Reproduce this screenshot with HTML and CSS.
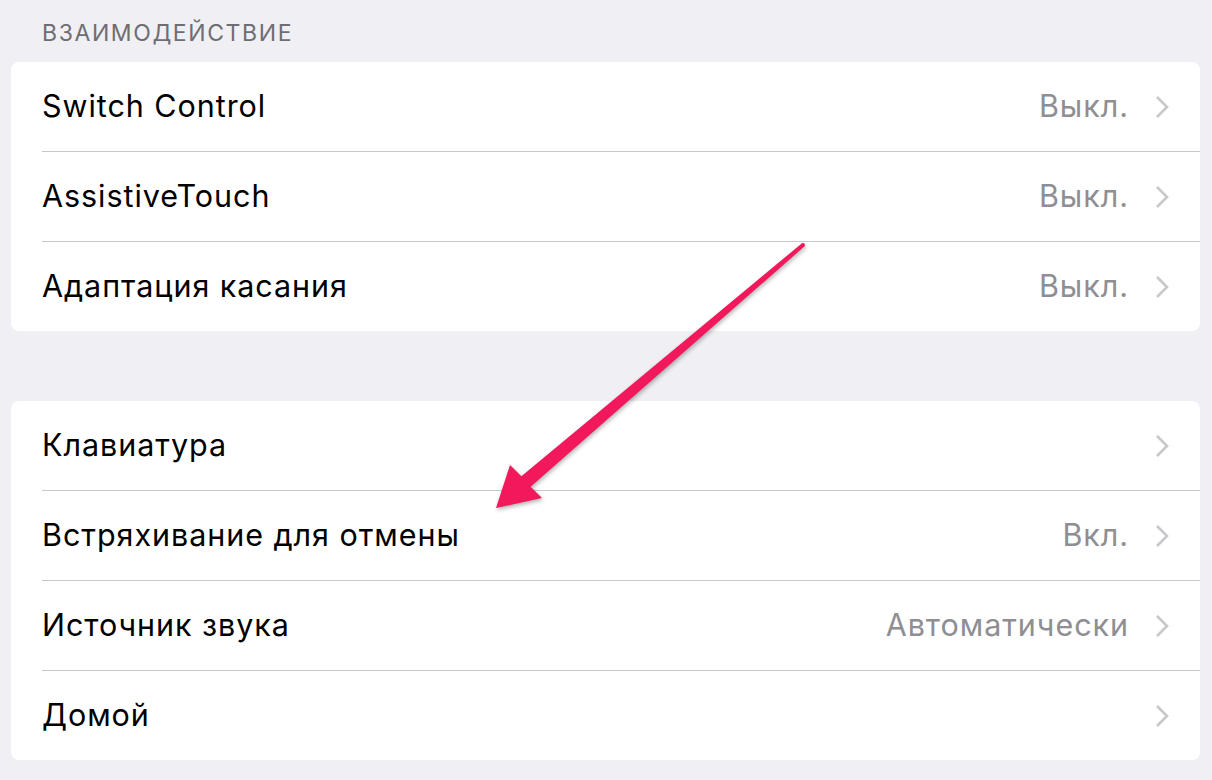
FILE: index.html
```html
<!DOCTYPE html>
<html>
    <head>
        <meta charset='utf-8'/>
        <link rel="stylesheet" href="styles.css">
    </head>
    <body>
        <div class='page'>
            <div class='section-title'>ВЗАИМОДЕЙСТВИЕ</div>
            <div class='card'>
                <div class='row'><div class='row-inner'>
                    <span class='label'>Switch Control</span>
                    <span class='value'>Выкл.</span>
                    <svg class='chevron' viewBox='0 0 14 24'><path d='M2 2 L12 12 L2 22'/></svg>
                </div></div>
                <div class='row'><div class='row-inner'>
                    <span class='label'>AssistiveTouch</span>
                    <span class='value'>Выкл.</span>
                    <svg class='chevron' viewBox='0 0 14 24'><path d='M2 2 L12 12 L2 22'/></svg>
                </div></div>
                <div class='row'><div class='row-inner'>
                    <span class='label'>Адаптация касания</span>
                    <span class='value'>Выкл.</span>
                    <svg class='chevron' viewBox='0 0 14 24'><path d='M2 2 L12 12 L2 22'/></svg>
                </div></div>
            </div>
            <div class='card second'>
                <div class='row'><div class='row-inner'>
                    <span class='label'>Клавиатура</span>
                    <svg class='chevron' viewBox='0 0 14 24'><path d='M2 2 L12 12 L2 22'/></svg>
                </div></div>
                <div class='row'><div class='row-inner'>
                    <span class='label'>Встряхивание для отмены</span>
                    <span class='value'>Вкл.</span>
                    <svg class='chevron' viewBox='0 0 14 24'><path d='M2 2 L12 12 L2 22'/></svg>
                </div></div>
                <div class='row'><div class='row-inner'>
                    <span class='label'>Источник звука</span>
                    <span class='value'>Автоматически</span>
                    <svg class='chevron' viewBox='0 0 14 24'><path d='M2 2 L12 12 L2 22'/></svg>
                </div></div>
                <div class='row'><div class='row-inner'>
                    <span class='label'>Домой</span>
                    <svg class='chevron' viewBox='0 0 14 24'><path d='M2 2 L12 12 L2 22'/></svg>
                </div></div>
            </div>
        </div>
        <!-- стрелка-указатель поверх списка -->
        <svg class='pointer' width='1212' height='780' viewBox='0 0 1212 780'>
            <polygon points='496,508 510,465 521.4,476.2 801.7,243.5 804.3,246.5 530.6,486.8 542,498'/>
            <circle cx='803' cy='245' r='2'/>
        </svg>
    </body>
</html>
```

FILE: styles.css
```css
body{
    margin:0;
    padding:0;
    background-color:#efeff4;
    font-family:Inter, "Liberation Sans", sans-serif;
    width:1212px;
    height:780px;
    overflow:hidden;
}
.page{
    padding:0 12px 0 11px;
}
.section-title{
    height:62px;
    display:flex;
    align-items:center;
    padding-left:31px;
    padding-top:3px;
    box-sizing:border-box;
    font-size:23px;
    letter-spacing:1.6px;
    color:#6d6d72;
}
.card{
    background-color:#fff;
    border-radius:8px;
}
.card.second{
    margin-top:70px;
}
.row{
    padding-left:31px;
}
.row-inner{
    height:90px;
    box-sizing:border-box;
    display:flex;
    align-items:center;
    border-bottom:1px solid #c8c7cc;
    padding-right:31px;
    padding-bottom:3px;
}
.row:last-child .row-inner{
    border-bottom:none;
    height:89px;
}
.label{
    flex:1;
    font-size:30.5px;
    letter-spacing:0.95px;
    color:#000;
}
.value{
    font-size:30.5px;
    letter-spacing:0.95px;
    color:#8e8e93;
    margin-right:26px;
}
.chevron{
    width:14px;
    height:24px;
    fill:none;
    stroke:#c7c7cc;
    stroke-width:2.6;
    margin-top:3px;
}
.pointer{
    position:absolute;
    left:0;
    top:0;
    fill:#f2185c;
    filter:drop-shadow(1px 2px 2px rgba(0,0,0,0.3));
}
```
